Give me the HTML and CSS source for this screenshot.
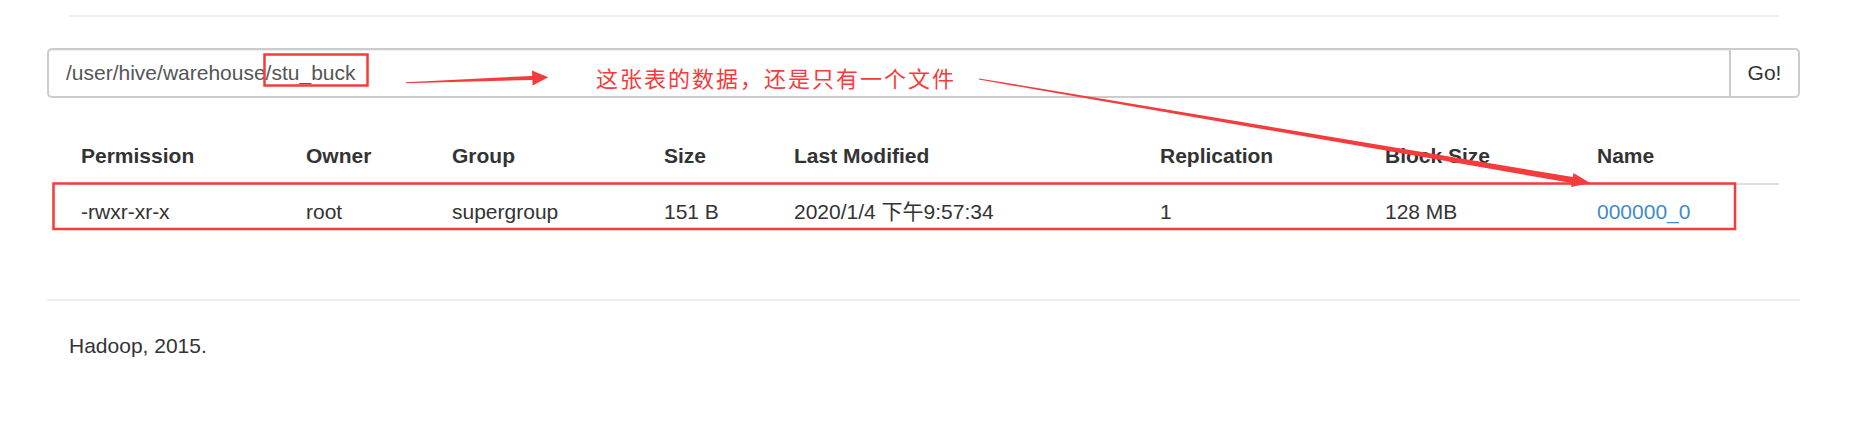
FILE: index.html
```html
<!DOCTYPE html>
<html lang="zh-CN">

<head>
    <meta charset="UTF-8">
    <meta name="viewport" content="width=device-width, initial-scale=1.0">
    <title>Browse Directory</title>
    <link rel="stylesheet" href="styles.css">
</head>

<body>

    <div class="wrap">
        <div class="top-rule"></div>

        <form class="search">
            <input class="path" type="text" value="/user/hive/warehouse/stu_buck">
            <button type="button" class="go">Go!</button>
        </form>

        <table class="files">
            <colgroup>
                <col class="c-perm">
                <col class="c-owner">
                <col class="c-group">
                <col class="c-size">
                <col class="c-mod">
                <col class="c-rep">
                <col class="c-block">
                <col class="c-name">
            </colgroup>
            <thead>
                <tr>
                    <th>Permission</th>
                    <th>Owner</th>
                    <th>Group</th>
                    <th>Size</th>
                    <th>Last Modified</th>
                    <th>Replication</th>
                    <th>Block Size</th>
                    <th>Name</th>
                </tr>
            </thead>
            <tbody>
                <tr>
                    <td>-rwxr-xr-x</td>
                    <td>root</td>
                    <td>supergroup</td>
                    <td>151 B</td>
                    <td>2020/1/4 下午9:57:34</td>
                    <td>1</td>
                    <td>128 MB</td>
                    <td><a href="#">000000_0</a></td>
                </tr>
            </tbody>
        </table>

        <div class="footer">
            <p>Hadoop, 2015.</p>
        </div>
    </div>

    <!-- annotations drawn over the screenshot -->
    <div class="note">这张表的数据，还是只有一个文件</div>
    <svg class="marks" width="1876" height="428" viewBox="0 0 1876 428">
        <rect x="264.5" y="54.5" width="103" height="31" />
        <rect x="53.5" y="183.5" width="1681.5" height="45.5" />
        <polygon class="arrow"
            points="406,83.2 532.4,79.9 532.6,85.4 548.3,77.3 532,70.4 532.2,75.9 406,82.2" />
        <polygon class="arrow"
            points="978.9,79.6 1571.8,183 1571.1,186.9 1590,183 1573.5,173.1 1572.8,177 979.1,78.4" />
    </svg>
</body>

</html>
```
FILE: styles.css
```css
* {
    padding: 0;
    margin: 0;
    box-sizing: border-box;
}

body {
    position: relative;
    width: 1876px;
    height: 428px;
    overflow: hidden;
    background: #fff;
    color: #333;
    font-family: "Liberation Sans", Arial, "Noto Sans CJK SC", sans-serif;
    font-size: 21px;
    line-height: 30px;
}

.wrap {
    width: 1753px;
    margin-left: 47px;
    padding-top: 15px;
}

.top-rule {
    height: 2px;
    margin: 0 21px 0 22px;
    background-color: #eee;
}

.search {
    display: flex;
    height: 50px;
    margin-top: 31px;
}

.path {
    flex: 1;
    height: 50px;
    padding: 0 17px;
    border: 2px solid #ccc;
    border-right: none;
    border-radius: 5px 0 0 5px;
    box-shadow: inset 0 1px 1px rgba(0, 0, 0, .075);
    font: inherit;
    color: #555;
    outline: none;
}

.go {
    width: 71px;
    height: 50px;
    border: 2px solid #ccc;
    border-radius: 0 5px 5px 0;
    background-color: #fff;
    font: inherit;
    color: #333;
}

.files {
    width: 1710px;
    margin: 31px 0 0 22px;
    border-collapse: collapse;
    table-layout: fixed;
}

.c-perm { width: 225px; }
.c-owner { width: 146px; }
.c-group { width: 212px; }
.c-size { width: 130px; }
.c-mod { width: 366px; }
.c-rep { width: 225px; }
.c-block { width: 212px; }
.c-name { width: 194px; }

.files th,
.files td {
    padding: 12px;
    text-align: left;
    white-space: nowrap;
}

.files th {
    font-weight: bold;
    border-bottom: 2px solid #ddd;
}

.files a {
    color: #428bca;
    text-decoration: none;
}

.footer {
    margin-top: 60px;
    border-top: 2px solid #eee;
    padding: 30px 22px 0;
}

/* red marks */
.note {
    position: absolute;
    left: 596px;
    top: 66px;
    font-family: "Noto Sans CJK SC", sans-serif;
    font-size: 22px;
    line-height: 22px;
    letter-spacing: 2px;
    color: #f53b3b;
}

.marks {
    position: absolute;
    left: 0;
    top: 0;
    pointer-events: none;
}

.marks rect {
    fill: none;
    stroke: #f53b3b;
    stroke-width: 2.5;
}

.marks .arrow {
    fill: #f53b3b;
}
```
